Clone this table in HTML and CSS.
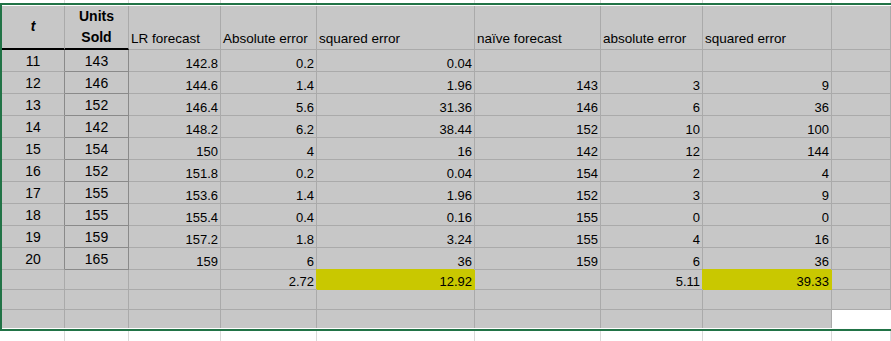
FILE: index.html
```html
<!DOCTYPE html>
<html>
<head>
<meta charset="utf-8">
<link rel="stylesheet" href="styles.css">
</head>
<body>
<div class="page">
  <div class="strip strip-top">
    <div></div><div></div><div></div><div></div><div></div><div></div><div></div><div></div><div></div>
  </div>
  <div class="sel">
    <div class="sheet">
      <div class="c hd hd-t"><span class="tvar">t</span></div>
      <div class="c hd hd-u"><span>Units<br>Sold</span></div>
      <div class="c hd">LR forecast</div>
      <div class="c hd">Absolute error</div>
      <div class="c hd">squared error</div>
      <div class="c hd">naïve forecast</div>
      <div class="c hd">absolute error</div>
      <div class="c hd">squared error</div>
      <div class="c hd"></div>

      <div class="c t">11</div><div class="c u">143</div><div class="c n">142.8</div><div class="c n">0.2</div><div class="c n">0.04</div><div class="c n"></div><div class="c n"></div><div class="c n"></div><div class="c"></div>
      <div class="c t">12</div><div class="c u">146</div><div class="c n">144.6</div><div class="c n">1.4</div><div class="c n">1.96</div><div class="c n">143</div><div class="c n">3</div><div class="c n">9</div><div class="c"></div>
      <div class="c t">13</div><div class="c u">152</div><div class="c n">146.4</div><div class="c n">5.6</div><div class="c n">31.36</div><div class="c n">146</div><div class="c n">6</div><div class="c n">36</div><div class="c"></div>
      <div class="c t">14</div><div class="c u">142</div><div class="c n">148.2</div><div class="c n">6.2</div><div class="c n">38.44</div><div class="c n">152</div><div class="c n">10</div><div class="c n">100</div><div class="c"></div>
      <div class="c t">15</div><div class="c u">154</div><div class="c n">150</div><div class="c n">4</div><div class="c n">16</div><div class="c n">142</div><div class="c n">12</div><div class="c n">144</div><div class="c"></div>
      <div class="c t">16</div><div class="c u">152</div><div class="c n">151.8</div><div class="c n">0.2</div><div class="c n">0.04</div><div class="c n">154</div><div class="c n">2</div><div class="c n">4</div><div class="c"></div>
      <div class="c t">17</div><div class="c u">155</div><div class="c n">153.6</div><div class="c n">1.4</div><div class="c n">1.96</div><div class="c n">152</div><div class="c n">3</div><div class="c n">9</div><div class="c"></div>
      <div class="c t">18</div><div class="c u">155</div><div class="c n">155.4</div><div class="c n">0.4</div><div class="c n">0.16</div><div class="c n">155</div><div class="c n">0</div><div class="c n">0</div><div class="c"></div>
      <div class="c t">19</div><div class="c u">159</div><div class="c n">157.2</div><div class="c n">1.8</div><div class="c n">3.24</div><div class="c n">155</div><div class="c n">4</div><div class="c n">16</div><div class="c"></div>
      <div class="c t">20</div><div class="c u">165</div><div class="c n">159</div><div class="c n">6</div><div class="c n">36</div><div class="c n">159</div><div class="c n">6</div><div class="c n">36</div><div class="c"></div>

      <div class="c"></div><div class="c"></div><div class="c"></div><div class="c n">2.72</div><div class="c n hl">12.92</div><div class="c"></div><div class="c n">5.11</div><div class="c n hl">39.33</div><div class="c"></div>
      <div class="c"></div><div class="c"></div><div class="c"></div><div class="c"></div><div class="c"></div><div class="c"></div><div class="c"></div><div class="c"></div><div class="c"></div>
      <div class="c last"></div><div class="c last"></div><div class="c last"></div><div class="c last"></div><div class="c last"></div><div class="c last"></div><div class="c last"></div><div class="c last"></div><div class="c last blank"></div>
    </div>
  </div>
  <div class="strip strip-bottom">
    <div></div><div></div><div></div><div></div><div></div><div></div><div></div><div></div><div></div>
  </div>
</div>
</body>
</html>
```

FILE: styles.css
```css
* { box-sizing: border-box; }

html, body {
  margin: 0;
  padding: 0;
  background: #ffffff;
}

body {
  font-family: "Liberation Sans", Arial, sans-serif;
  color: #000;
  overflow: hidden;
}

.page {
  width: 891px;
  height: 341px;
  overflow: hidden;
}

.strip {
  display: grid;
  grid-template-columns: 65px 64px 92px 96px 158px 126px 102px 129px 1fr;
  background: #fff;
}

.strip > div {
  border-right: 1px solid #dadada;
}

.strip-top { height: 3px; }
.strip-bottom { height: 10px; }

.sel {
  border-top: 2px solid #217346;
  border-bottom: 2px solid #217346;
  border-left: 2px solid #217346;
  padding: 1px 0;
  background: #fff;
}

.sheet {
  display: grid;
  grid-template-columns: 63px 64px 92px 96px 158px 126px 102px 129px 1fr;
  grid-template-rows: 44px repeat(10, 22px) 20px 20px 18px;
}

.c {
  background: #c7c7c7;
  border-right: 1px solid #aaaaaa;
  border-bottom: 1px solid #aaaaaa;
  display: flex;
  align-items: flex-end;
  font-size: 13px;
  line-height: 15px;
  white-space: nowrap;
}

.hd {
  font-size: 13.5px;
  line-height: 16px;
  padding: 0 0 2px 2px;
}

.hd-t, .hd-u {
  border-bottom: 2px solid #000;
  justify-content: center;
  padding: 0;
  font-weight: bold;
  font-size: 14px;
}

.hd-t {
  align-items: center;
  padding-bottom: 2px;
}

.tvar {
  font-style: italic;
}

.hd-u {
  line-height: 21px;
  text-align: center;
}

.n {
  justify-content: flex-end;
  padding-right: 2px;
}

.t, .u {
  justify-content: center;
  font-size: 14px;
  line-height: 16px;
  padding-bottom: 2px;
}

.t {
  border-right-color: #8a8a8a;
}

.u {
  border-right-color: #8a8a8a;
  border-bottom-color: #8a8a8a;
}

.hl {
  background: #c9c800;
  border-right-color: #c9c800;
  border-bottom-color: #c9c800;
  box-shadow: -1px -1px 0 #c9c800;
}

.last {
  border-bottom: none;
}

.blank {
  background: #fff;
  border-right: none;
}
```
